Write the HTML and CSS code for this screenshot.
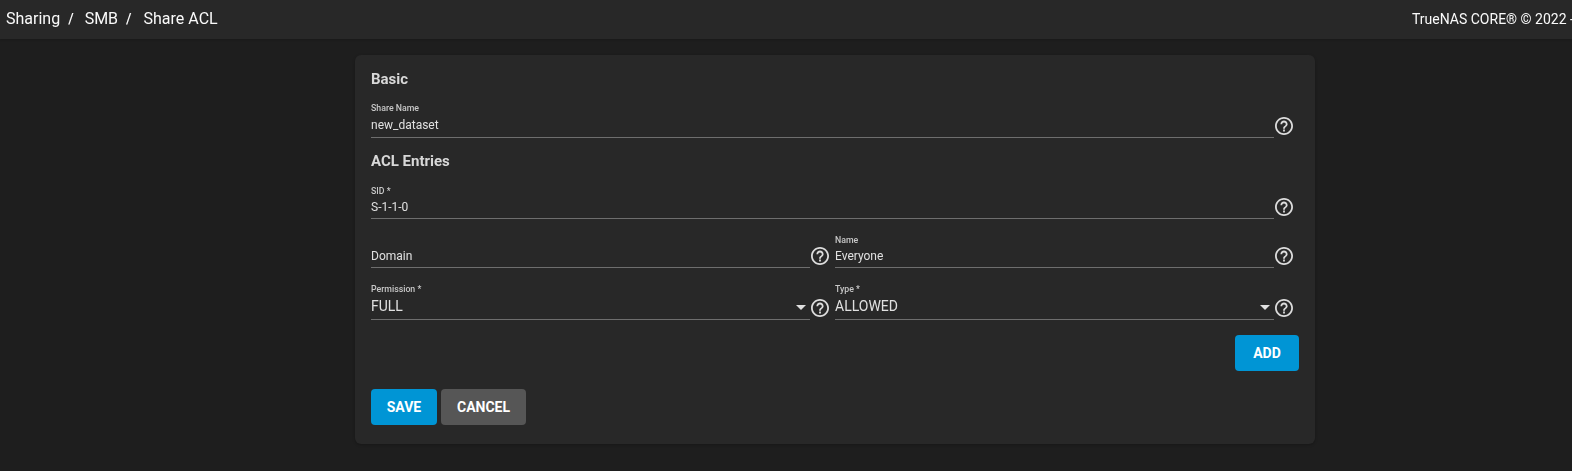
FILE: index.html
```html
<!DOCTYPE html>
<html lang="en">
<head>
<meta charset="utf-8">
<title>Share ACL</title>
<link rel="stylesheet" href="styles.css">
</head>
<body>
<svg class="defs" width="0" height="0" aria-hidden="true"><defs>
<symbol id="help" viewBox="2 2 20 20"><path d="M11 18h2v-2h-2v2zm1-16C6.48 2 2 6.48 2 12s4.48 10 10 10 10-4.48 10-10S17.52 2 12 2zm0 18c-4.41 0-8-3.59-8-8s3.59-8 8-8 8 3.59 8 8-3.59 8-8 8zm0-14c-2.21 0-4 1.79-4 4h2c0-1.1.9-2 2-2s2 .9 2 2c0 2-3 1.75-3 5h2c0-2.25 3-2.5 3-5 0-2.21-1.79-4-4-4z"/></symbol>
</defs></svg>
<header class="topbar">
  <nav class="crumbs"><span>Sharing</span><span class="sep">/</span><span>SMB</span><span class="sep">/</span><span>Share ACL</span></nav>
  <div class="copyright">TrueNAS CORE® © 2022 -</div>
</header>
<main class="main">
  <form class="card">
    <h3 class="heading">Basic</h3>
    <div class="row row-share">
      <div class="field"><label class="label">Share Name</label><div class="value">new_dataset</div></div>
      <svg class="help"><use href="#help"/></svg>
    </div>
    <h3 class="heading heading-acl">ACL Entries</h3>
    <div class="row row-sid">
      <div class="field"><label class="label">SID *</label><div class="value">S-1-1-0</div></div>
      <svg class="help"><use href="#help"/></svg>
    </div>
    <div class="cols cols-name">
      <div class="row">
        <div class="field"><label class="label"></label><div class="value">Domain</div></div>
        <svg class="help"><use href="#help"/></svg>
      </div>
      <div class="row">
        <div class="field"><label class="label">Name</label><div class="value">Everyone</div></div>
        <svg class="help"><use href="#help"/></svg>
      </div>
    </div>
    <div class="cols cols-select">
      <div class="row">
        <div class="field"><label class="label">Permission *</label><div class="value select"><span>FULL</span><i class="caret"></i></div></div>
        <svg class="help"><use href="#help"/></svg>
      </div>
      <div class="row">
        <div class="field"><label class="label">Type *</label><div class="value select"><span>ALLOWED</span><i class="caret"></i></div></div>
        <svg class="help"><use href="#help"/></svg>
      </div>
    </div>
    <div class="add-row"><button type="button" class="btn primary add">ADD</button></div>
    <div class="actions">
      <button type="button" class="btn primary save">SAVE</button>
      <button type="button" class="btn secondary">CANCEL</button>
    </div>
  </form>
</main>
</body>
</html>
```
FILE: styles.css
```css
* { box-sizing: border-box; }
html, body { margin: 0; height: 100%; }
body {
  background: #1e1e1e;
  color: #e0e0e0;
  font-family: Roboto, "Liberation Sans", sans-serif;
  overflow: hidden;
}
.defs { position: absolute; }
.topbar {
  height: 39px;
  background: #282828;
  display: flex;
  align-items: center;
  justify-content: space-between;
  padding: 0 0 2px 6px;
  overflow: hidden;
  box-shadow: 0 1px 2px rgba(0,0,0,.2);
}
.crumbs { display: flex; align-items: center; font-size: 16px; color: #fafafa; will-change: opacity; }
.sep { margin: 0 11px 0 8px; font-size: 14px; font-weight: 500; }
.sep + span + .sep { margin: 0 12px 0 8px; }
.copyright {
  width: 160px;
  white-space: nowrap;
  font-size: 14px;
  color: #fafafa;
  will-change: opacity;
}
.main { padding: 16px 0 0 98px; display: flex; justify-content: center; }
.card {
  width: 960px;
  height: 389px;
  background: #282828;
  border-radius: 6px;
  padding: 16px;
  box-shadow: 0 1px 3px rgba(0,0,0,.25);
}
.heading { margin: 0; font-size: 15px; line-height: 16px; font-weight: 700; color: #d8d8d8; will-change: opacity; }
.row { display: flex; align-items: flex-end; gap: 1px; padding-right: 6px; }
.row-share { margin-top: 15px; }
.heading-acl { margin-top: 15px; }
.row-sid { margin-top: 16px; }
.cols { display: grid; grid-template-columns: 1fr 1fr; }
.cols-name { margin-top: 13px; }
.cols-select { margin-top: 15px; }
.field { flex: 1; min-width: 0; border-bottom: 1px solid #6e6e6e; }
.label { display: block; height: 12px; font-size: 8.75px; line-height: 12px; font-weight: 500; color: #c8c8c8; will-change: opacity; }
.value { height: 23px; font-size: 12px; line-height: 23px; color: #e0e0e0; will-change: opacity; }
.row-sid .value, .cols-name .value { height: 21px; line-height: 21px; }
.cols-name .label { margin-top: 2px; }
.select { height: 24px; display: flex; justify-content: space-between; align-items: center; padding: 0 4px 1px 0; font-size: 14px; line-height: 21px; }
.caret { width: 0; height: 0; margin-top: 2px; border-left: 5px solid transparent; border-right: 5px solid transparent; border-top: 5px solid #e0e0e0; }
.help { width: 18px; height: 18px; fill: #dcdcdc; flex: none; margin-bottom: 3px; }
.add-row { display: flex; justify-content: flex-end; margin-top: 15px; }
.actions { display: flex; gap: 4px; margin-top: 18px; }
.btn {
  height: 36px;
  border: 0;
  border-radius: 4px;
  font: 700 14px Roboto, "Liberation Sans", sans-serif;
  color: #fff;
  padding: 0 16px;
}
.add { width: 64px; }
.save { width: 66px; padding: 0; }
.primary { background: #0095d5; }
.secondary { background: #565656; }
```
